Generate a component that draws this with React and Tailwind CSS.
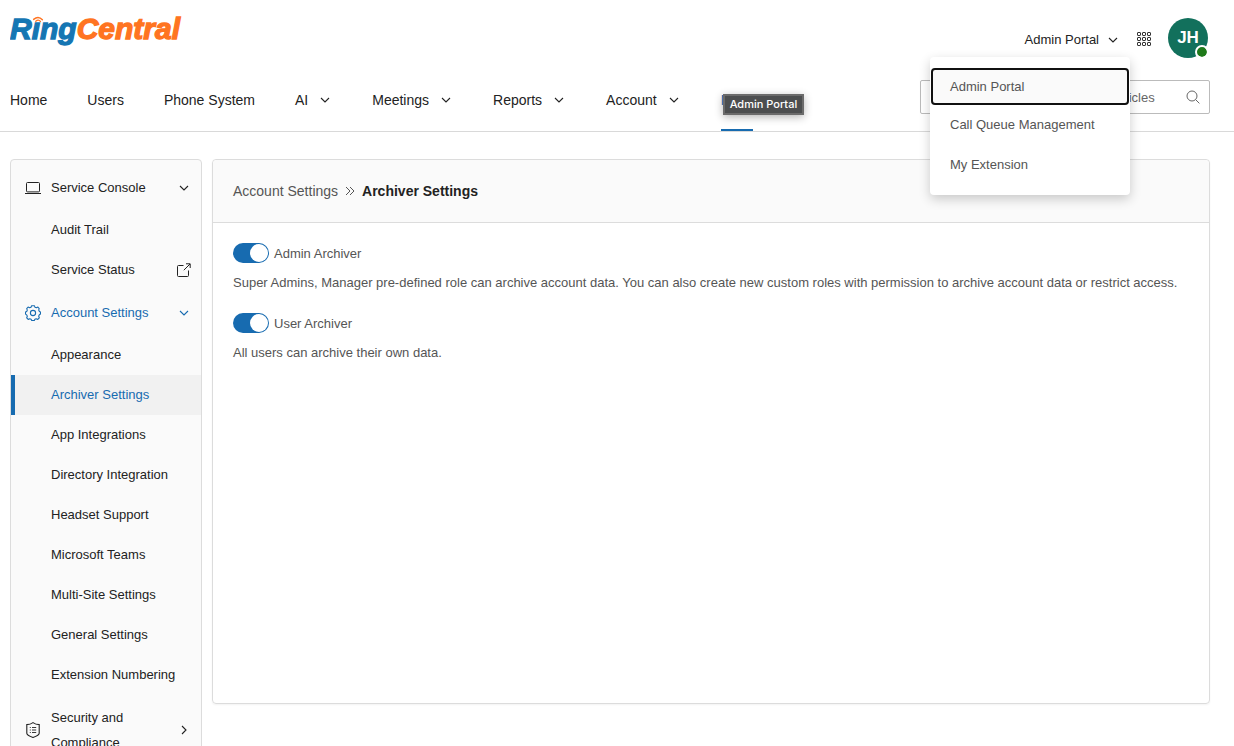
import React from "react";

const Chevron = ({ className = "" }) => (
  <svg viewBox="0 0 10 6" className={`w-[10px] h-[6px] shrink-0 ${className}`} fill="none" stroke="currentColor" strokeWidth="1.1" aria-hidden="true">
    <path d="M1 1 L5 5 L9 1" />
  </svg>
);

const LaptopIcon = () => (
  <svg viewBox="0 0 16 14" className="w-4 h-[14px]" fill="none" stroke="currentColor" strokeWidth="1" aria-hidden="true">
    <rect x="1.5" y="1.5" width="13" height="9.4" rx="1" />
    <path d="M0 12.5h16" />
  </svg>
);

const GearIcon = () => (
  <svg viewBox="0 0 16 16" className="w-4 h-4" fill="none" stroke="currentColor" strokeWidth="1.1" strokeLinejoin="round" aria-hidden="true">
    <path d="M6.6 0.7h2.8l.5 1.5 1.5.6 1.5-.7 1.3 1.5-.5 1.5.7 1.4 1.1.6v2l-1.2.7-.6 1.5.6 1.5-1.5 1.6-1.6-.7-1.3.6-.6 1.2H6.7l-.6-1.2-1.4-.6-1.5.7-1.5-1.6.6-1.5-.6-1.4-1.2-.8v-2l1.2-.6.6-1.4-.6-1.5 1.4-1.5 1.5.7 1.4-.6z" />
    <circle cx="8" cy="8" r="2.6" />
  </svg>
);

const ShieldIcon = () => (
  <svg viewBox="0 0 16 16" className="w-4 h-4" fill="none" stroke="currentColor" strokeWidth="1.1" aria-hidden="true">
    <path d="M8 0.6 C9.8 2 12 2.6 14.2 2.6 V11.2 C14.2 13 11.4 14.2 8 15.4 C4.6 14.2 1.8 13 1.8 11.2 V2.6 C4 2.6 6.2 2 8 0.6 Z" />
    <path strokeWidth="0.9" d="M4.8 5.5h1M7 5.5h4.2M4.8 8h1M7 8h4.2M4.8 10.5h1M7 10.5h4.2" />
  </svg>
);

const ExternalIcon = () => (
  <svg viewBox="0 0 14 14" className="w-[14px] h-[14px]" fill="none" stroke="currentColor" strokeWidth="1" aria-hidden="true">
    <path d="M6.5 2.5H1.5a1 1 0 0 0-1 1v9a1 1 0 0 0 1 1h9a1 1 0 0 0 1-1V7.5" />
    <path d="M9 0.8h4.2V5M13 1 L6.8 7.2" />
  </svg>
);

const AppsIcon = () => (
  <svg viewBox="0 0 14 14" className="w-[14px] h-[14px]" fill="none" stroke="currentColor" strokeWidth="1" aria-hidden="true">
    {[0.5, 5.5, 10.5].map((y) =>
      [0.5, 5.5, 10.5].map((x) => <rect key={`${x}-${y}`} x={x} y={y} width="3" height="3" rx="0.6" />)
    )}
  </svg>
);

const SearchIcon = () => (
  <svg viewBox="0 0 14 14" className="w-[14px] h-[14px]" fill="none" stroke="currentColor" strokeWidth="1" aria-hidden="true">
    <circle cx="6" cy="6" r="5" />
    <path d="M9.6 9.6 L13.4 13.4" />
  </svg>
);

const Logo = () => (
  <a href="#" aria-label="RingCentral">
    <svg viewBox="0 0 172 34" className="w-[172px] h-[34px]">
      <text x="0" y="27" fontFamily="Liberation Sans, Arial, sans-serif" fontSize="30" fontWeight="700" fontStyle="italic" strokeWidth="1.3">
        <tspan fill="#1576b3" stroke="#1576b3">Rıng</tspan>
        <tspan fill="#ff7421" stroke="#ff7421">Central</tspan>
      </text>
      <g fill="none" stroke="#ff7421" strokeWidth="1.4" strokeLinecap="round">
        <path d="M23.6 7.4 Q28.4 3.4 32.4 7.8" />
        <path d="M25.8 9.2 Q28.3 7 30.4 9.4" />
      </g>
    </svg>
  </a>
);

const navItems = [
  { label: "Home" },
  { label: "Users" },
  { label: "Phone System" },
  { label: "AI", menu: true },
  { label: "Meetings", menu: true },
  { label: "Reports", menu: true },
  { label: "Account", menu: true },
];

const accountLinks = [
  "Appearance",
  "Archiver Settings",
  "App Integrations",
  "Directory Integration",
  "Headset Support",
  "Microsoft Teams",
  "Multi-Site Settings",
  "General Settings",
  "Extension Numbering",
];

const PortalMenu = () => (
  <div className="absolute right-[104px] top-[57px] z-20 flex flex-col w-[200px] rounded bg-white pt-[11px] pb-[10px] shadow-[0_4px_12px_rgba(0,0,0,0.2)] text-[#555]">
    <button className="h-[37px] mx-px px-[17px] text-left rounded bg-[#fafafa] border-2 border-[#111]">Admin Portal</button>
    <button className="h-10 px-5 text-left">Call Queue Management</button>
    <button className="h-10 px-5 text-left">My Extension</button>
  </div>
);

const Header = () => (
  <header className="relative border-b border-[#d9d9d9] pl-[10px] pr-6">
    <div className="flex items-start justify-between h-[69px]">
      <div className="pt-3">
        <Logo />
      </div>
      <div className="flex items-center pt-[18px] pr-[2px]">
        <button className="flex items-center gap-[9px] pt-1">
          Admin Portal <Chevron />
        </button>
        <button aria-label="Apps" className="ml-[19px] pt-[2px]">
          <AppsIcon />
        </button>
        <button className="relative ml-[17px] size-10 rounded-full bg-[#12705c] text-white text-[17px] font-bold">
          JH
          <span className="absolute right-[1px] bottom-[1px] size-[10px] rounded-full bg-[#1f7a1a] outline-2 outline-white" />
        </button>
      </div>
    </div>

    <div className="flex justify-between">
      <nav className="flex text-sm">
        {navItems.map((item) => (
          <a key={item.label} href="#" className={`flex items-center gap-3 h-[62px] ${item.menu ? "mr-[42px]" : "mr-10"}`}>
            {item.label}
            {item.menu && <Chevron />}
          </a>
        ))}
        <a href="#" className="relative flex items-center h-[62px] border-b-2 border-[#176bb0] pt-[2px] text-[#176bb0]">
          More
          <span role="tooltip" className="absolute left-[2px] top-[25px] z-10 border-2 border-[#6b6b6b] bg-[#4c4e4f] px-[5px] font-[Inter,sans-serif] text-[11px] leading-[17px] font-medium text-white whitespace-nowrap shadow-[0_2px_8px_rgba(0,0,0,0.3)]">
            Admin Portal
          </span>
        </a>
      </nav>
      <div className="mt-[11px] flex items-center w-[290px] h-[34px] border border-[#bbb] rounded-xs pr-[9px] text-[#666]">
        <input aria-label="Search" placeholder="Search for settings and help articles" className="flex-1 min-w-0 h-full pl-[27px] outline-none placeholder:text-[#666]" />
        <button aria-label="Submit search">
          <SearchIcon />
        </button>
      </div>
    </div>
    <PortalMenu />
  </header>
);

const SideLink = ({ label, active, children }) => (
  <a
    href="#"
    className={`flex items-center justify-between h-10 pr-[10px] ${active ? "border-l-4 border-[#176bb0] bg-[#f1f1f1] pl-9 text-[#176bb0]" : "pl-10"}`}
  >
    {label}
    {children}
  </a>
);

const SideGroup = ({ icon, label, active, closed }) => (
  <button
    className={`flex items-center w-full pl-[14px] pr-3 text-left ${closed ? "h-[70px] leading-[25px]" : "h-11"} ${active ? "text-[#176bb0]" : ""}`}
  >
    {icon}
    <span className="ml-[10px] w-[110px]">{label}</span>
    <Chevron className={closed ? "ml-auto -rotate-90" : "ml-auto"} />
  </button>
);

const Sidebar = () => (
  <aside className="w-48 shrink-0 rounded border border-[#dcdcdc] bg-[#fafafa] pt-[6px]">
    <SideGroup icon={<LaptopIcon />} label="Service Console" />
    <SideLink label="Audit Trail" />
    <SideLink label="Service Status">
      <ExternalIcon />
    </SideLink>
    <div className="h-px" />
    <SideGroup icon={<GearIcon />} label="Account Settings" active />
    {accountLinks.map((label) => (
      <SideLink key={label} label={label} active={label === "Archiver Settings"} />
    ))}
    <SideGroup icon={<ShieldIcon />} label="Security and Compliance" closed />
  </aside>
);

const Toggle = ({ label, text }) => (
  <div className="mb-5">
    <label className="flex items-center gap-[5px] h-5">
      <input type="checkbox" role="switch" defaultChecked className="peer sr-only" />
      <span className="flex justify-end items-center w-9 h-5 rounded-full bg-[#176bb0] pr-px">
        <span className="size-[18px] rounded-full bg-white" />
      </span>
      <span className="pt-[2px]">{label}</span>
    </label>
    <p className="mt-[10px] leading-5">{text}</p>
  </div>
);

const App = () => {
  return (
    <div className="bg-white font-['Liberation_Sans',Arial,sans-serif] text-[13px] text-[#222]">
      <Header />
      <div className="flex items-start gap-[10px] pl-[10px] pr-6 pt-[27px]">
        <Sidebar />
        <main className="flex-1 min-w-0 min-h-[545px] rounded border border-[#dcdcdc] shadow-xs">
          <div className="flex items-center h-[63px] px-5 border-b border-[#dcdcdc] bg-[#fafafa] text-sm rounded-t">
            <a href="#" className="text-[#555]">Account Settings</a>
            <svg viewBox="0 0 10 10" className="mx-[7px] size-[10px]" fill="none" stroke="#555" aria-hidden="true">
              <path d="M1 1 L5 5 L1 9 M5 1 L9 5 L5 9" />
            </svg>
            <h1 className="font-bold">Archiver Settings</h1>
          </div>
          <div className="px-5 pt-5 text-[#555]">
            <Toggle
              label="Admin Archiver"
              text="Super Admins, Manager pre-defined role can archive account data. You can also create new custom roles with permission to archive account data or restrict access."
            />
            <Toggle label="User Archiver" text="All users can archive their own data." />
          </div>
        </main>
      </div>
    </div>
  );
};

export default App;
